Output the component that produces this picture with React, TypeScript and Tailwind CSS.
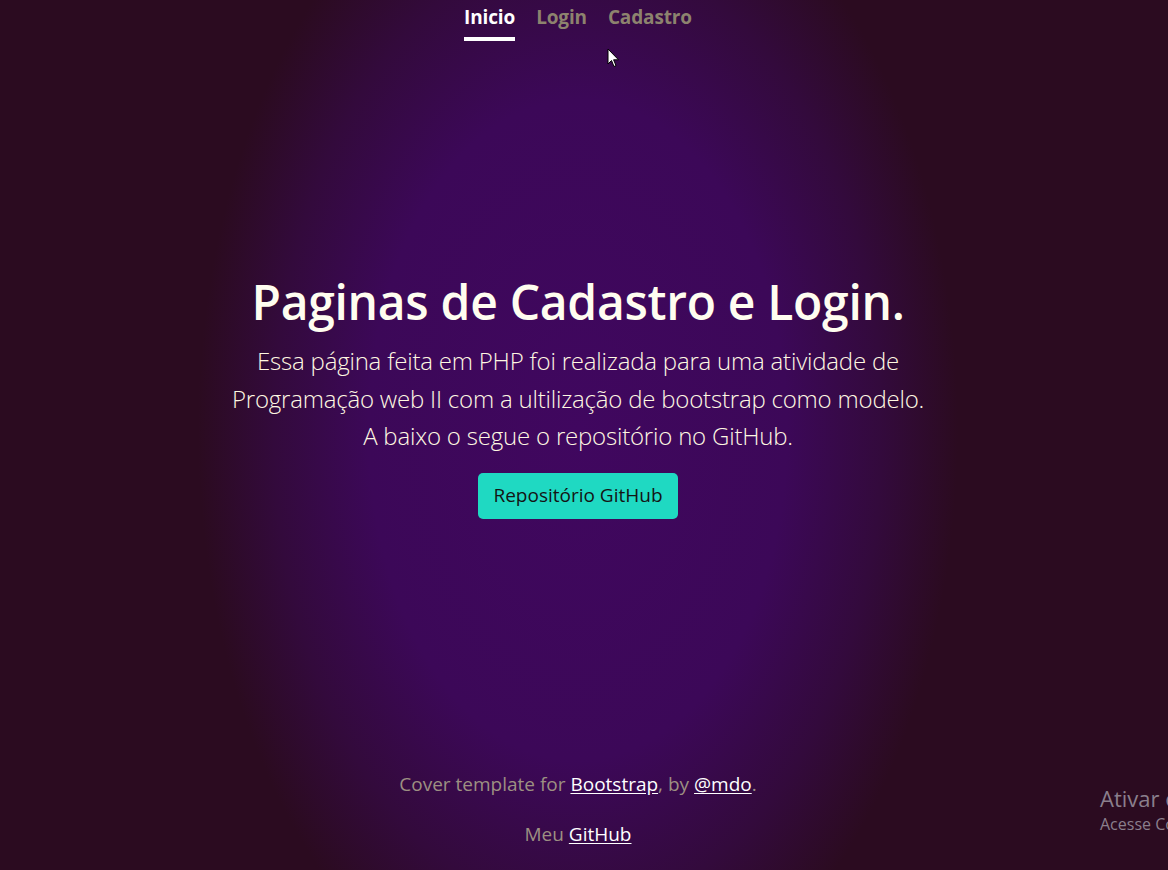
const navItems = [
  { label: "Inicio", active: true },
  { label: "Login", active: false },
  { label: "Cadastro", active: false },
];

function Cursor() {
  return (
    <svg
      className="absolute left-[607px] top-[48px]"
      width="13"
      height="21"
      viewBox="0 0 13 21"
    >
      <path
        d="M1 1 L1 16 L4.5 12.5 L7 18.5 L9 17.6 L6.6 11.8 L11.5 11.8 Z"
        fill="#fff"
        stroke="#000"
        strokeWidth="1"
        strokeLinejoin="round"
      />
    </svg>
  );
}

export default function App() {
  return (
    <div
      className="relative h-[870px] w-[1168px] overflow-hidden bg-[#2b0b20] bg-[radial-gradient(ellipse_380px_600px_at_578px_430px,#40075f_0%,#3c0858_55%,#330a3c_80%,#2b0b20_100%)] text-[#fffcec]"
      style={{ fontFamily: '"Open Sans", "Noto Sans", sans-serif' }}
    >
      <div className="flex h-full w-[1156px] flex-col items-center">
        <nav className="flex gap-[21px] pt-[2px]">
          {navItems.map((item) => (
            <a
              key={item.label}
              href="#"
              className={`border-b-[4px] pb-[5px] text-[19px] font-bold leading-[30px] tracking-[-0.15px] ${item.active ? "border-white text-white" : "border-transparent text-[#8d836e]"}`}
            >
              {item.label}
            </a>
          ))}
        </nav>

        <main className="mt-[231px] flex flex-col items-center text-center">
          <h1 className="mb-[10px] text-[48px] font-semibold leading-[60px] tracking-[-0.3px] text-[#fffdf0]">
            Paginas de Cadastro e Login.
          </h1>
          <p className="mb-[18px] text-[24px] font-light leading-[37.5px] tracking-[-0.2px] text-[#fff8e2]">
            Essa página feita em PHP foi realizada para uma atividade de
            <br />
            Programação web II com a ultilização de bootstrap como modelo.
            <br />A baixo o segue o repositório no GitHub.
          </p>
          <a
            href="#"
            className="flex h-[46px] w-[200px] items-center justify-center rounded-[5px] bg-[#1fd9c2] text-[19px] text-[#141414]"
          >
            Repositório GitHub
          </a>
        </main>

        <footer className="mt-auto mb-[21px] flex flex-col items-center gap-[20px] text-[19px] leading-[30px] text-[#9d9082]">
          <p>
            Cover template for{" "}
            <a href="#" className="text-white underline underline-offset-2">
              Bootstrap
            </a>
            , by{" "}
            <a href="#" className="text-white underline underline-offset-2">
              @mdo
            </a>
            .
          </p>
          <p>
            Meu{" "}
            <a href="#" className="text-white underline underline-offset-2">
              GitHub
            </a>
          </p>
        </footer>
      </div>

      <div className="absolute left-[1100px] top-[784px] whitespace-nowrap text-[#8a7f8c]">
        <p className="text-[22px] leading-[28px]">Ativar o Windows</p>
        <p className="text-[16px] leading-[24px]">
          Acesse Configurações para ativar o Windows.
        </p>
      </div>

      <Cursor />
    </div>
  );
}
